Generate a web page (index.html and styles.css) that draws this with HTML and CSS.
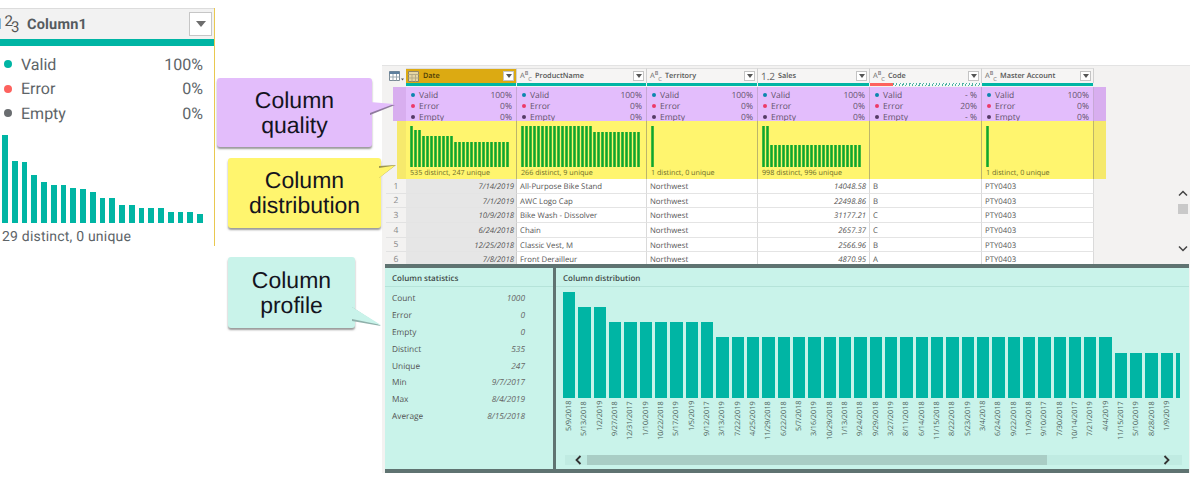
FILE: index.html
```html
<!DOCTYPE html>
<html lang="en">
<head>
<meta charset="utf-8">
<title>Column profiling</title>
<link rel="stylesheet" href="styles.css">
</head>
<body>
<main class="stage">
  <section class="card">
    <header class="card-head">
      <span class="num-icon"><i>1</i><i class="n2">2</i><i class="n3">3</i></span>
      <span class="card-title">Column1</span>
      <span class="card-filter"><svg width="10" height="6" viewBox="0 0 10 6"><path d="M0 0h10L5 6z" fill="#6d6d6d"/></svg></span>
    </header>
    <div class="card-strip"></div>
    <ul class="card-quality">
      <li><b class="cdot teal"></b><span>Valid</span><em>100%</em></li>
      <li><b class="cdot red"></b><span>Error</span><em>0%</em></li>
      <li><b class="cdot grey"></b><span>Empty</span><em>0%</em></li>
    </ul>
    <div class="card-bars">
      <i class="c88"></i><i class="c62"></i><i class="c61"></i><i class="c48"></i><i class="c41"></i><i class="c38"></i><i class="c38"></i>
      <i class="c35"></i><i class="c34"></i><i class="c31"></i><i class="c25"></i><i class="c25"></i><i class="c18"></i><i class="c18"></i>
      <i class="c15"></i><i class="c15"></i><i class="c15"></i><i class="c11"></i><i class="c11"></i><i class="c11"></i><i class="c9"></i>
    </div>
    <p class="card-foot">29 distinct, 0 unique</p>
  </section>

  <section class="window">
    <div class="top">
      <div class="table">
        <div class="row head">
          <div class="corner"><svg width="15" height="10" viewBox="0 0 15 10"><path d="M.5.5h10v9H.5z" fill="#fff" stroke="#7a8a96"/><path d="M.5.5h10v2.5H.5z" fill="#5d7f9e"/><path d="M.5 6h10M4 3v6.500M7.500 3v6.500" stroke="#9aa7b0" fill="none"/><path d="M12 7.500h3L13.500 9.500z" fill="#555"/></svg></div>
          <div class="hcell date"><svg class="ticon" width="11" height="11" viewBox="0 0 11 11"><path d="M.5.5h10v10H.5z" fill="#e4d5a4" stroke="#8d8468"/><path d="M.5 3.500h10M4 3.500v7M7.500 3.500v7M.5 7h10" stroke="#b5ab88" fill="none"/></svg><span class="hname">Date</span><span class="filter"><svg width="6" height="4" viewBox="0 0 6 4"><path d="M0 0h6L3 4z" fill="#555"/></svg></span></div>
          <div class="hcell"><span class="abc">A<sup>B</sup><sub>C</sub></span><span class="hname">ProductName</span><span class="filter"><svg width="6" height="4" viewBox="0 0 6 4"><path d="M0 0h6L3 4z" fill="#555"/></svg></span></div>
          <div class="hcell"><span class="abc">A<sup>B</sup><sub>C</sub></span><span class="hname">Territory</span><span class="filter"><svg width="6" height="4" viewBox="0 0 6 4"><path d="M0 0h6L3 4z" fill="#555"/></svg></span></div>
          <div class="hcell"><span class="dec">1.2</span><span class="hname">Sales</span><span class="filter"><svg width="6" height="4" viewBox="0 0 6 4"><path d="M0 0h6L3 4z" fill="#555"/></svg></span></div>
          <div class="hcell code"><span class="abc">A<sup>B</sup><sub>C</sub></span><span class="hname">Code</span><span class="filter"><svg width="6" height="4" viewBox="0 0 6 4"><path d="M0 0h6L3 4z" fill="#555"/></svg></span></div>
          <div class="hcell"><span class="abc">A<sup>B</sup><sub>C</sub></span><span class="hname">Master Account</span><span class="filter"><svg width="6" height="4" viewBox="0 0 6 4"><path d="M0 0h6L3 4z" fill="#555"/></svg></span></div>
        </div>

        <div class="row quality">
          <div class="rownum"></div>
          <div class="qcell"><p><b class="dot v"></b>Valid<em>100%</em></p><p><b class="dot e"></b>Error<em>0%</em></p><p><b class="dot m"></b>Empty<em>0%</em></p></div>
          <div class="qcell"><p><b class="dot v"></b>Valid<em>100%</em></p><p><b class="dot e"></b>Error<em>0%</em></p><p><b class="dot m"></b>Empty<em>0%</em></p></div>
          <div class="qcell"><p><b class="dot v"></b>Valid<em>100%</em></p><p><b class="dot e"></b>Error<em>0%</em></p><p><b class="dot m"></b>Empty<em>0%</em></p></div>
          <div class="qcell"><p><b class="dot v"></b>Valid<em>100%</em></p><p><b class="dot e"></b>Error<em>0%</em></p><p><b class="dot m"></b>Empty<em>0%</em></p></div>
          <div class="qcell"><p><b class="dot v"></b>Valid<em>- %</em></p><p><b class="dot e"></b>Error<em>20%</em></p><p><b class="dot m"></b>Empty<em>- %</em></p></div>
          <div class="qcell"><p><b class="dot v"></b>Valid<em>100%</em></p><p><b class="dot e"></b>Error<em>0%</em></p><p><b class="dot m"></b>Empty<em>0%</em></p></div>
        </div>

        <div class="row dist">
          <div class="rownum"></div>
          <div class="dcell">
            <div class="mini"><i class="t41"></i><i class="t37"></i><i class="t37"></i><i class="t31"></i><i class="t31"></i><i class="t31"></i><i class="t31"></i><i class="t31"></i><i class="t31"></i><i class="t31"></i><i class="t31"></i><i class="t25"></i><i class="t25"></i><i class="t25"></i><i class="t25"></i><i class="t25"></i><i class="t25"></i><i class="t25"></i><i class="t25"></i><i class="t25"></i><i class="t25"></i><i class="t25"></i><i class="t25"></i><i class="t25"></i><i class="t25"></i></div>
            <span>535 distinct, 247 unique</span>
          </div>
          <div class="dcell">
            <div class="mini"><i class="t41"></i><i class="t41"></i><i class="t41"></i><i class="t41"></i><i class="t41"></i><i class="t41"></i><i class="t41"></i><i class="t41"></i><i class="t41"></i><i class="t41"></i><i class="t41"></i><i class="t41"></i><i class="t41"></i><i class="t41"></i><i class="t41"></i><i class="t41"></i><i class="t41"></i><i class="t41"></i><i class="t35"></i><i class="t35"></i><i class="t35"></i><i class="t35"></i><i class="t35"></i><i class="t35"></i><i class="t35"></i><i class="t35"></i><i class="t35"></i><i class="t35"></i><i class="t35"></i><i class="t35"></i></div>
            <span>266 distinct, 9 unique</span>
          </div>
          <div class="dcell">
            <div class="mini"><i class="t41"></i></div>
            <span>1 distinct, 0 unique</span>
          </div>
          <div class="dcell">
            <div class="mini"><i class="t41"></i><i class="t41"></i><i class="t22"></i><i class="t22"></i><i class="t22"></i><i class="t22"></i><i class="t22"></i><i class="t22"></i><i class="t22"></i><i class="t22"></i><i class="t22"></i><i class="t22"></i><i class="t22"></i><i class="t22"></i><i class="t22"></i><i class="t22"></i><i class="t22"></i><i class="t22"></i><i class="t22"></i><i class="t22"></i><i class="t22"></i><i class="t22"></i><i class="t22"></i><i class="t22"></i><i class="t22"></i></div>
            <span>998 distinct, 996 unique</span>
          </div>
          <div class="dcell"></div>
          <div class="dcell">
            <div class="mini"><i class="t41"></i></div>
            <span>1 distinct, 0 unique</span>
          </div>
        </div>

        <div class="row data"><div class="rownum">1</div><div class="cell dt">7/14/2019</div><div class="cell">All-Purpose Bike Stand</div><div class="cell">Northwest</div><div class="cell nm">14048.58</div><div class="cell">B</div><div class="cell">PTY0403</div></div>
        <div class="row data"><div class="rownum">2</div><div class="cell dt">7/1/2019</div><div class="cell">AWC Logo Cap</div><div class="cell">Northwest</div><div class="cell nm">22498.86</div><div class="cell">B</div><div class="cell">PTY0403</div></div>
        <div class="row data"><div class="rownum">3</div><div class="cell dt">10/9/2018</div><div class="cell">Bike Wash - Dissolver</div><div class="cell">Northwest</div><div class="cell nm">31177.21</div><div class="cell">C</div><div class="cell">PTY0403</div></div>
        <div class="row data"><div class="rownum">4</div><div class="cell dt">6/24/2018</div><div class="cell">Chain</div><div class="cell">Northwest</div><div class="cell nm">2657.37</div><div class="cell">C</div><div class="cell">PTY0403</div></div>
        <div class="row data"><div class="rownum">5</div><div class="cell dt">12/25/2018</div><div class="cell">Classic Vest, M</div><div class="cell">Northwest</div><div class="cell nm">2566.96</div><div class="cell">B</div><div class="cell">PTY0403</div></div>
        <div class="row data"><div class="rownum">6</div><div class="cell dt">7/8/2018</div><div class="cell">Front Derailleur</div><div class="cell">Northwest</div><div class="cell nm">4870.95</div><div class="cell">A</div><div class="cell">PTY0403</div></div>
      </div>
      <div class="vscroll">
        <svg width="10" height="7" viewBox="0 0 10 7"><path d="M1 5.500l4-4 4 4" fill="none" stroke="#444" stroke-width="1.500"/></svg>
        <span class="vthumb"></span>
        <svg class="vdown" width="10" height="7" viewBox="0 0 10 7"><path d="M1 1.500l4 4 4-4" fill="none" stroke="#444" stroke-width="1.500"/></svg>
      </div>
    </div>

    <div class="profile">
      <div class="stats">
        <h2>Column statistics</h2>
        <dl>
          <div><dt>Count</dt><dd>1000</dd></div>
          <div><dt>Error</dt><dd>0</dd></div>
          <div><dt>Empty</dt><dd>0</dd></div>
          <div><dt>Distinct</dt><dd>535</dd></div>
          <div><dt>Unique</dt><dd>247</dd></div>
          <div><dt>Min</dt><dd>9/7/2017</dd></div>
          <div><dt>Max</dt><dd>8/4/2019</dd></div>
          <div><dt>Average</dt><dd>8/15/2018</dd></div>
        </dl>
      </div>
      <div class="distribution">
        <h2>Column distribution</h2>
        <div class="chart">
          <div class="col"><i class="p106"></i><span>5/9/2018</span></div>
          <div class="col"><i class="p91"></i><span>5/13/2018</span></div>
          <div class="col"><i class="p91"></i><span>1/2/2019</span></div>
          <div class="col"><i class="p76"></i><span>9/27/2018</span></div>
          <div class="col"><i class="p76"></i><span>12/31/2017</span></div>
          <div class="col"><i class="p76"></i><span>1/10/2019</span></div>
          <div class="col"><i class="p76"></i><span>10/22/2018</span></div>
          <div class="col"><i class="p76"></i><span>5/17/2019</span></div>
          <div class="col"><i class="p76"></i><span>1/5/2019</span></div>
          <div class="col"><i class="p76"></i><span>9/12/2017</span></div>
          <div class="col"><i class="p61"></i><span>3/13/2019</span></div>
          <div class="col"><i class="p61"></i><span>7/22/2019</span></div>
          <div class="col"><i class="p61"></i><span>4/25/2019</span></div>
          <div class="col"><i class="p61"></i><span>11/29/2018</span></div>
          <div class="col"><i class="p61"></i><span>6/22/2018</span></div>
          <div class="col"><i class="p61"></i><span>5/7/2018</span></div>
          <div class="col"><i class="p61"></i><span>3/16/2019</span></div>
          <div class="col"><i class="p61"></i><span>10/29/2018</span></div>
          <div class="col"><i class="p61"></i><span>1/13/2018</span></div>
          <div class="col"><i class="p61"></i><span>9/24/2018</span></div>
          <div class="col"><i class="p61"></i><span>9/29/2018</span></div>
          <div class="col"><i class="p61"></i><span>3/27/2019</span></div>
          <div class="col"><i class="p61"></i><span>8/11/2018</span></div>
          <div class="col"><i class="p61"></i><span>6/14/2018</span></div>
          <div class="col"><i class="p61"></i><span>11/15/2018</span></div>
          <div class="col"><i class="p61"></i><span>8/22/2018</span></div>
          <div class="col"><i class="p61"></i><span>5/23/2019</span></div>
          <div class="col"><i class="p61"></i><span>3/4/2018</span></div>
          <div class="col"><i class="p61"></i><span>6/24/2018</span></div>
          <div class="col"><i class="p61"></i><span>9/22/2018</span></div>
          <div class="col"><i class="p61"></i><span>11/9/2018</span></div>
          <div class="col"><i class="p61"></i><span>9/10/2017</span></div>
          <div class="col"><i class="p61"></i><span>7/30/2018</span></div>
          <div class="col"><i class="p61"></i><span>10/14/2017</span></div>
          <div class="col"><i class="p61"></i><span>7/21/2019</span></div>
          <div class="col"><i class="p61"></i><span>4/4/2019</span></div>
          <div class="col"><i class="p45"></i><span>11/15/2017</span></div>
          <div class="col"><i class="p45"></i><span>5/10/2019</span></div>
          <div class="col"><i class="p45"></i><span>8/28/2018</span></div>
          <div class="col"><i class="p45"></i><span>1/9/2019</span></div>
          <div class="col"><i class="p45"></i></div>
        </div>
        <div class="hscroll">
          <svg width="7" height="10" viewBox="0 0 7 10"><path d="M5.500 1l-4 4 4 4" fill="none" stroke="#333" stroke-width="1.800"/></svg>
          <span class="hthumb"></span>
          <svg width="7" height="10" viewBox="0 0 7 10"><path d="M1.500 1l4 4-4 4" fill="none" stroke="#333" stroke-width="1.800"/></svg>
        </div>
      </div>
    </div>
  </section>

  <span class="tab tab-pl"></span>
  <span class="tab tab-pr"></span>
  <span class="tab tab-yl"></span>
  <span class="tab tab-yr"></span>

  <div class="callout c-quality">Column<br>quality</div>
  <div class="callout c-dist">Column<br>distribution</div>
  <div class="callout c-profile">Column<br>profile</div>
  <svg class="tails" width="1200" height="478" viewBox="0 0 1200 478">
    <path d="M370 103L395 105L370 115z" fill="#8f7a9e"/>
    <path d="M370 102L394 104L370 113z" fill="#e3bdfb"/>
    <path d="M379 166L396 165L379 178z" fill="#9c9650"/>
    <path d="M379 168L395 165.500L379 178z" fill="#fff56e"/>
    <path d="M352 307L381 326L352 321z" fill="#8fb0aa"/>
    <path d="M352 307L381 325L352 319z" fill="#c9f3ea"/>
  </svg>
</main>
</body>
</html>
```
FILE: styles.css
```css
* { box-sizing: border-box; }
html, body { margin: 0; padding: 0; background: #fff; }
body { width: 1200px; height: 478px; overflow: hidden; font-family: "Open Sans", "Liberation Sans", sans-serif; text-rendering: geometricPrecision; }
.stage { position: relative; display: flex; align-items: flex-start; width: 1200px; height: 478px; }
i, em { font-style: normal; }
p, ul, dl, dd, h2 { margin: 0; padding: 0; }

/* left zoomed card */
.card { width: 215px; height: 238px; margin-top: 8px; flex: none; border-right: 1.500px solid #e9c84f; font-family: Roboto, "Liberation Sans", sans-serif; color: #5d6468; overflow: hidden; }
.card-head { display: flex; align-items: center; height: 31px; background: #f2f2f2; border-top: 1px solid #dcdcdc; }
.num-icon { display: flex; width: 32px; margin-left: -5px; flex: none; font-size: 15px; color: #555; }
.num-icon i { display: block; width: 7.500px; }
.n2 { transform: translate(2px, -3px); }
.n3 { transform: translate(1px, 3px); }
.card-title { font-size: 14.500px; font-weight: 700; letter-spacing: .2px; color: #555b5f; }
.card-filter { display: flex; align-items: center; justify-content: center; width: 23px; height: 24px; margin-left: auto; margin-right: 2px; background: #fff; border: 1px solid #c6c6c6; }
.card-strip { height: 7px; background: #00b5a4; }
.card-quality { list-style: none; padding: 6px 11px 0 4px; }
.card-quality li { display: flex; align-items: center; height: 24.500px; font-size: 16px; }
.card-quality em { margin-left: auto; }
.cdot { width: 8px; height: 8px; margin-right: 9px; border-radius: 50%; }
.teal { background: #00b5a4; }
.red { background: #fd625e; }
.grey { background: #6a6d70; }
.card-bars { display: flex; align-items: flex-end; gap: 4px; height: 88px; margin-top: 9px; padding-left: 2px; }
.card-bars i { display: block; width: 5.750px; flex: none; background: #00b5a4; }
.c88 { height: 88px; } .c62 { height: 62px; } .c61 { height: 61px; } .c48 { height: 48px; } .c41 { height: 41px; }
.c38 { height: 38px; } .c35 { height: 35px; } .c34 { height: 34px; } .c31 { height: 31px; } .c25 { height: 25px; }
.c18 { height: 18px; } .c15 { height: 15px; } .c11 { height: 11px; } .c9 { height: 9px; }
.card-foot { margin: 5px 0 0 2px; font-size: 14px; line-height: 18px; letter-spacing: .2px; white-space: nowrap; }

/* main window */
.window { width: 808px; height: 408px; margin-top: 65px; margin-left: 167px; flex: none; display: flex; flex-direction: column; background: #f3f2f1; border-top: 1px solid #e3e3e3; font-size: 7.800px; color: #555; }
.top { display: flex; height: 198px; padding: 2px 0 0 4px; flex: none; }
.table { width: 708px; height: 196px; overflow: hidden; flex: none; }
.row { display: grid; grid-template-columns: 20px 111px 130px 111px 112px 112px 112px; }
.head { height: 18px; }
.corner { display: flex; align-items: center; padding: 0 0 3px 3px; }
.hcell { display: flex; align-items: center; height: 15px; margin-bottom: 3px; padding: 0 2px 0 3px; position: relative; background: #f6f5f4; border-top: 1px solid #dedede; border-right: 1px solid #d0d0d0; white-space: nowrap; }
.hcell::after { content: ""; position: absolute; left: 0; right: -1px; bottom: -3px; height: 3px; background: #00b5a4; border-right: 1px solid #e8f5f3; }
.date { background: #dcaa12; padding-left: 2px; }
.code::after { background: linear-gradient(#fd625e, #fd625e) left / 23px 100% no-repeat, repeating-linear-gradient(115deg, #4fb0a2 0 1px, #f4fbf9 1px 3px); }
.hname { font-weight: 600; font-size: 7.300px; margin-left: 2px; color: #555; }
.date .hname { margin-left: 4px; color: #4b3c08; }
.abc { position: relative; width: 13px; height: 11px; font-size: 7.500px; line-height: 11px; color: #666; flex: none; }
.abc sup, .abc sub { font-size: 5.500px; line-height: 0; }
.dec { width: 15px; font-size: 10px; color: #666; flex: none; }
.filter { display: flex; align-items: center; justify-content: center; width: 11px; height: 10px; margin-left: auto; background: #fff; border: 1px solid #c4c4c4; }
.rownum { display: flex; align-items: center; justify-content: center; padding-top: 1px; color: #888; font-size: 8.500px; }
.quality { height: 35px; padding-top: 1px; }
.qcell { padding: 2.500px 4px 0 4px; background: #e3bdfc; border-right: 1px solid #c7a8d6; color: #64546e; }
.qcell p { display: flex; align-items: center; height: 11.200px; font-size: 8.500px; }
.qcell em { margin-left: auto; }
.dot { width: 4px; height: 4px; margin: 0 4px 0 1px; border-radius: 50%; flex: none; }
.v { background: #0b86ad; }
.e { background: #ec3a68; }
.m { background: #553a66; }
.dist { height: 58px; }
.dcell { display: flex; flex-direction: column; padding: 5px 0 0 4px; background: #fff56e; border-right: 1px solid #bdb56a; color: #6d6c2a; font-size: 7.200px; white-space: nowrap; }
.dcell span { margin-top: 1px; line-height: 10px; }
.mini { display: flex; align-items: flex-end; gap: 1px; height: 41px; }
.mini i { display: block; width: 3px; flex: none; background: #0fa62e; transform: scaleX(.85); }
.t41 { height: 41px; } .t37 { height: 37px; } .t35 { height: 35px; } .t31 { height: 31px; } .t25 { height: 25px; } .t22 { height: 22px; }
.data { height: 14.670px; }
.data .rownum { border-bottom: 1px solid #e2e2e2; }
.cell { padding: 2px 3px 0 3px; line-height: 12.500px; background: #fff; border-right: 1px solid #dadada; border-bottom: 1.500px solid #e4e4e4; white-space: nowrap; overflow: hidden; }
.dt { background: #e6e6e6; text-align: right; font-style: italic; padding-right: 2px; border-right-color: #ccc; }
.nm { text-align: right; font-style: italic; }
.vscroll { display: flex; flex-direction: column; align-items: center; width: 12px; margin: 122px 0 0 83px; height: 62px; flex: none; }
.vthumb { width: 10px; height: 10px; margin-top: 7px; background: #c9c9c9; }
.vdown { margin-top: auto; }

/* profile pane */
.profile { display: flex; width: 804px; height: 209px; margin-left: 3px; flex: none; background: #c9f3ea; border-top: 4px solid #5f7371; border-bottom: 4px solid #5f7371; color: #555; font-size: 8.300px; }
.profile h2 { height: 19px; padding-left: 7px; font-size: 8px; font-weight: 600; line-height: 21px; color: #3f4a48; border-bottom: 1px solid #b5e3d9; }
.stats { width: 171px; flex: none; border-right: 3px solid #5f7371; }
.stats dl { padding: 3.500px 28px 0 7px; }
.stats dl div { display: flex; justify-content: space-between; align-items: center; height: 16.800px; }
.stats dd { font-style: italic; color: #666; }
.distribution { flex: 1; display: flex; flex-direction: column; min-width: 0; padding-bottom: 4px; }
.chart { display: flex; gap: 3px; width: 619px; height: 158px; margin-left: 7px; padding-top: 5px; overflow: hidden; }
.col { display: flex; flex-direction: column; width: 12.330px; flex: none; height: 153px; }
.col i { display: block; margin-top: auto; background: #00b5a4; flex: none; }
.col span { align-self: center; height: 44px; margin-top: 3px; writing-mode: vertical-rl; transform: rotate(180deg); text-align: end; font-size: 7.300px; line-height: 12px; color: #4e5f5b; white-space: nowrap; }
.col:last-child { width: 4px; }
.col:last-child i { margin-top: 61px; width: 4px; }
.p106 { height: 106px; } .p91 { height: 91px; } .p76 { height: 76px; } .p61 { height: 61px; } .p45 { height: 45px; }
.hscroll { display: flex; align-items: center; width: 617px; height: 10px; margin: auto 0 0 9px; background: #c0ebe2; padding: 0 12px 0 10px; }
.hthumb { width: 460px; height: 10px; margin: 0 auto 0 5px; background: #a9cdc5; }

/* overlays */
.tab { position: absolute; }
.tab-pl { left: 393px; top: 87px; width: 13px; height: 34px; background: #d8aeef; }
.tab-pr { left: 1094px; top: 87px; width: 12px; height: 34px; background: #d8aeef; }
.tab-yl { left: 397px; top: 121px; width: 9px; height: 58px; background: #f6e96c; }
.tab-yr { left: 1094px; top: 121px; width: 12px; height: 58px; background: #f5e96c; }
.callout { position: absolute; display: flex; align-items: center; justify-content: center; text-align: center; font-family: "Liberation Sans", Arial, sans-serif; font-size: 23px; line-height: 25px; color: #14141e; border-radius: 3px; box-shadow: 0 2px 2px rgba(70, 70, 70, .55); }
.c-quality { left: 217px; top: 78px; width: 155px; height: 69px; background: #e3bdfb; }
.c-dist { left: 228px; top: 158px; width: 153px; height: 70px; background: #fff56e; }
.c-profile { left: 228px; top: 257px; width: 127px; height: 71px; background: #c9f3ea; }
.tails { position: absolute; left: 0; top: 0; pointer-events: none; }
```
